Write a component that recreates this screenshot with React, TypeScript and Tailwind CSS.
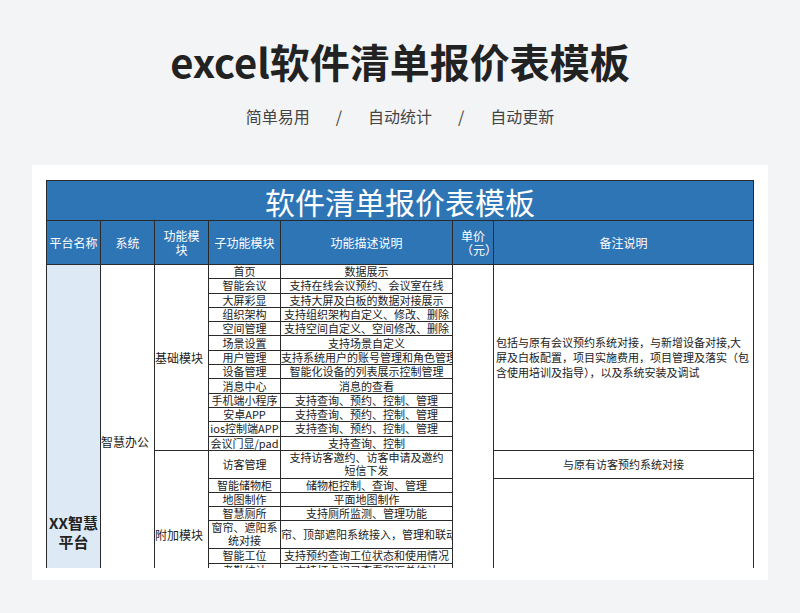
import React from "react";

const basic: [string, string][] = [
  ["首页", "数据展示"],
  ["智能会议", "支持在线会议预约、会议室在线"],
  ["大屏彩显", "支持大屏及白板的数据对接展示"],
  ["组织架构", "支持组织架构自定义、修改、删除"],
  ["空间管理", "支持空间自定义、空间修改、删除"],
  ["场景设置", "支持场景自定义"],
  ["用户管理", "支持系统用户的账号管理和角色管理"],
  ["设备管理", "智能化设备的列表展示控制管理"],
  ["消息中心", "消息的查看"],
  ["手机端小程序", "支持查询、预约、控制、管理"],
  ["安卓APP", "支持查询、预约、控制、管理"],
  ["ios控制端APP", "支持查询、预约、控制、管理"],
  ["会议门显/pad", "支持查询、控制"],
];

const extra: [string, string, number][] = [
  ["访客管理", "支持访客邀约、访客申请及邀约短信下发", 28],
  ["智能储物柜", "储物柜控制、查询、管理", 13.5],
  ["地图制作", "平面地图制作", 13.5],
  ["智慧厕所", "支持厕所监测、管理功能", 14],
  ["窗帘、遮阳系统对接", "帘、顶部遮阳系统接入，管理和联动", 28],
  ["智能工位", "支持预约查询工位状态和使用情况", 15],
  ["考勤统计", "支持打卡记录查看和汇总统计", 14],
  ["访客统计", "支持访客记录查看", 14],
  ["能耗管理", "支持能耗统计", 14],
  ["资产管理", "支持资产管理", 14],
];

const base = "border border-[#2a2a2a] text-center align-middle p-0 overflow-hidden";
const td = base + " whitespace-nowrap";
const tw = base + " whitespace-normal";

export default function App() {
  return (
    <div className="w-[800px] h-[613px] bg-[#f3f4f6] overflow-hidden" style={{ fontFamily: '"Noto Sans CJK SC", "Noto Sans", sans-serif' }}>
      <div className="h-[165px] flex flex-col items-center bg-[#f3f4f6]">
        <div className="mt-[34px] text-[40px] leading-[54px] font-bold text-[#222]">excel软件清单报价表模板</div>
        <div className="mt-[16px] flex items-center gap-[26px] text-[16px] text-[#444]">
          <span>简单易用</span><span>/</span><span>自动统计</span><span>/</span><span>自动更新</span>
        </div>
      </div>
      <div className="mx-[32px] h-[415px] bg-white pt-[15px] px-[14px] overflow-hidden">
        <div className="h-[388px] overflow-hidden">
          <table className="border-collapse table-fixed w-[707px] text-[11px] leading-[13px] text-[#222]">
            <colgroup>
              <col className="w-[54px]" /><col className="w-[54px]" /><col className="w-[54px]" />
              <col className="w-[72px]" /><col className="w-[172px]" /><col className="w-[41px]" /><col className="w-[260px]" />
            </colgroup>
            <tbody>
              <tr className="h-[40px] bg-[#2e75b6]">
                <td colSpan={7} className="border border-[#2a2a2a] text-center text-white text-[30px] leading-[38px]">软件清单报价表模板</td>
              </tr>
              <tr className="h-[44px] bg-[#2e75b6] text-white text-[12px] leading-[14px]">
                <td className={tw + " px-[2px]"}>平台名称</td>
                <td className={td}>系统</td>
                <td className={tw + " px-[6px]"}>功能模块</td>
                <td className={td}>子功能模块</td>
                <td className={td}>功能描述说明</td>
                <td className={tw + " px-[8px]"}>单价（元）</td>
                <td className={td}>备注说明</td>
              </tr>
              {basic.map(([a, b], i) => (
                <tr key={a} className="h-[14.3px]">
                  {i === 0 && (
                    <>
                      <td rowSpan={basic.length + extra.length + 6} className={tw + " bg-[#dde9f5] text-[15px] leading-[19px] font-bold px-[2px]"}>XX智慧平台</td>
                      <td rowSpan={basic.length + extra.length} className={td + " text-[12px] text-left"}>智慧办公</td>
                      <td rowSpan={basic.length} className={td + " text-[12px] text-left"}>基础模块</td>
                    </>
                  )}
                  <td className={td}>{a}</td>
                  <td className={td}>{b}</td>
                  {i === 0 && (
                    <>
                      <td rowSpan={basic.length + extra.length + 6} className={td}></td>
                      <td rowSpan={basic.length} className={tw + " text-left px-[2px] leading-[15px]"}>包括与原有会议预约系统对接，与新增设备对接,大屏及白板配置，项目实施费用，项目管理及落实（包含使用培训及指导），以及系统安装及调试</td>
                    </>
                  )}
                </tr>
              ))}
              {extra.map(([a, b, h], i) => (
                <tr key={a} style={{ height: h }}>
                  {i === 0 && <td rowSpan={extra.length} className={td + " text-[12px] text-left"}>附加模块</td>}
                  <td className={(h > 20 ? tw : td) + " px-[2px]"}>{a}</td>
                  <td className={(h > 20 && i === 0 ? tw + " px-[6px]" : td)}>{b}</td>
                  {i === 0 && <td className={td}>与原有访客预约系统对接</td>}
                  {i === 1 && <td rowSpan={extra.length - 1} className={td}></td>}
                </tr>
              ))}
              {[0, 1, 2, 3, 4, 5].map((i) => (
                <tr key={"f" + i} className="h-[30px]">
                  {i === 0 && <td rowSpan={6} className={td}></td>}
                  {i === 0 && <td rowSpan={6} className={td}></td>}
                  <td className={td}></td>
                  <td className={td}></td>
                  <td className={td}></td>
                </tr>
              ))}
            </tbody>
          </table>
        </div>
      </div>
    </div>
  );
}
